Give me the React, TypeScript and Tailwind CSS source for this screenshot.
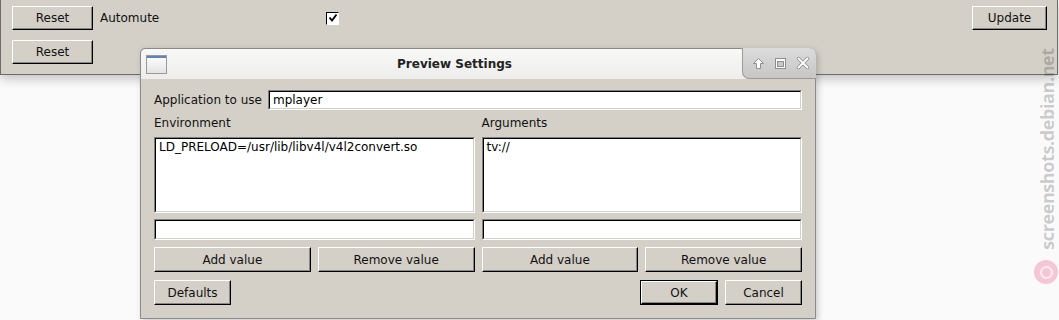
import React from "react"

const font = { fontFamily: '"DejaVu Sans", Verdana, sans-serif' }

function Btn({ children, className = "", isDefault = false }: { children: React.ReactNode; className?: string; isDefault?: boolean }) {
  return (
    <div className={(isDefault ? "border border-black " : "") + className}>
      <div className="flex h-full items-center justify-center border-t border-l border-t-white border-l-white border-b border-r border-b-black border-r-black bg-[#d4d0c8] text-[12px] text-[#111] shadow-[inset_-1px_-1px_0_#8a8782]">
        {children}
      </div>
    </div>
  )
}

function Field({ className = "", children }: { className?: string; children?: React.ReactNode }) {
  return (
    <div className={"border-t border-l border-t-[#808080] border-l-[#808080] border-b border-r border-b-white border-r-white " + className}>
      <div className="h-full border-t border-l border-t-black border-l-black border-b border-r border-b-[#d4d0c8] border-r-[#d4d0c8] bg-white px-[3px] text-[12px] leading-[16px] text-black">
        {children}
      </div>
    </div>
  )
}

function TitleControls() {
  return (
    <div className="flex h-[31px] w-[74px] items-center justify-center gap-[9px] rounded-tr-[7px] rounded-bl-[7px] border-l border-b border-[#9a9a9a] bg-gradient-to-b from-[#dcdcdc] to-[#c6c6c6] pl-[2px]">
      <svg width="13" height="13" viewBox="0 0 13 13">
        <path d="M6.5 1.5 L11.5 6.5 L8.5 6.5 L8.5 11.5 L4.5 11.5 L4.5 6.5 L1.5 6.5 Z" fill="#fff" stroke="#8e8e8e" strokeWidth="1" strokeLinejoin="round" />
      </svg>
      <svg width="13" height="13" viewBox="0 0 13 13">
        <rect x="1.5" y="1.5" width="10" height="10" fill="#fff" stroke="#8e8e8e" />
        <rect x="3.5" y="4.5" width="6" height="5" fill="#c8c8c8" stroke="#8e8e8e" />
      </svg>
      <svg width="14" height="14" viewBox="0 0 14 14">
        <path d="M2.5 2.5 L11.5 11.5 M11.5 2.5 L2.5 11.5" stroke="#8e8e8e" strokeWidth="3.4" strokeLinecap="round" />
        <path d="M2.5 2.5 L11.5 11.5 M11.5 2.5 L2.5 11.5" stroke="#fff" strokeWidth="1.8" strokeLinecap="round" />
      </svg>
    </div>
  )
}

function Column({ label, value }: { label: string; value: string }) {
  return (
    <div className="flex flex-col">
      <div className="h-[16px] text-[12px] leading-[16px] text-[#111]">{label}</div>
      <Field className="mt-[6px] h-[76px]">{value}</Field>
      <Field className="mt-[6px] h-[21px]" />
      <div className="mt-[7px] grid grid-cols-2 gap-[7px]">
        <Btn className="h-[25px]">Add value</Btn>
        <Btn className="h-[25px]">Remove value</Btn>
      </div>
    </div>
  )
}

export default function App() {
  return (
    <div className="relative h-[320px] w-[1059px] overflow-hidden bg-[#fafafa]" style={font}>
      {/* main window */}
      <div className="h-[75px] w-[1058px] border-l border-r border-b border-[#6e6c68] bg-[#d4d0c8] shadow-[0_4px_10px_rgba(0,0,0,0.22)]">
        <div className="flex items-center pt-[6px] pl-[11px] pr-[10px]">
          <Btn className="h-[24px] w-[81px]">Reset</Btn>
          <span className="ml-[7px] w-[226px] text-[12px] text-[#111]">Automute</span>
          <div className="flex h-[13px] w-[13px] items-center justify-center border-t border-l border-t-black border-l-black border-b border-r border-b-white border-r-white bg-white">
            <svg width="10" height="10" viewBox="0 0 10 10">
              <path d="M1.5 4.5 L4 7.5 L8.5 1.5" stroke="#000" strokeWidth="1.8" fill="none" />
            </svg>
          </div>
          <div className="flex-1" />
          <Btn className="h-[24px] w-[75px]">Update</Btn>
        </div>
        <div className="mt-[10px] pl-[11px]">
          <Btn className="h-[24px] w-[81px]">Reset</Btn>
        </div>
      </div>

      {/* watermark */}
      <div className="absolute left-[1047px] top-[149px] -translate-x-1/2 -translate-y-1/2 -rotate-90 whitespace-nowrap text-[18px] font-bold leading-none tracking-[-0.4px] text-[rgba(0,0,0,0.2)]" style={{ fontFamily: '"Open Sans", "DejaVu Sans", sans-serif' }}>
        screenshots.debian.net
      </div>
      <div className="absolute left-[1034px] top-[260px] flex h-[24px] w-[24px] items-center justify-center rounded-full bg-[#f5c6d5]">
        <div className="flex h-[13px] w-[13px] items-center justify-center rounded-full border-2 border-[#fbeef2]">
          <div className="h-[4px] w-[4px] rounded-full bg-[#f5c6d5]" />
        </div>
      </div>

      {/* dialog */}
      <div className="absolute left-[140px] top-[48px] h-[271px] w-[676px] rounded-tl-[5px] rounded-tr-[7px] border border-[#8a8a8a] bg-[#d4d0c8] shadow-[2px_2px_6px_rgba(0,0,0,0.2)]">
        <div className="flex h-[30px] items-stretch rounded-tl-[5px] rounded-tr-[7px] bg-gradient-to-b from-[#f8f8f7] to-[#ededeb]">
          <div className="flex items-center pl-[5px]">
            <div className="h-[19px] w-[21px] border border-[#9a9a9a] bg-gradient-to-b from-[#fefefe] to-[#e4e4e4]">
              <div className="h-[2px] bg-[#5b86c0]" />
            </div>
          </div>
          <div className="flex flex-1 items-center justify-center text-[12px] font-bold text-[#222]">Preview Settings</div>
          <div className="-mt-px -mr-px">
            <TitleControls />
          </div>
        </div>
        <div className="px-[13px] pt-[11px]">
          <div className="flex h-[20px] items-center">
            <span className="text-[12px] text-[#111]">Application to use</span>
            <Field className="ml-[6px] h-[20px] flex-1">mplayer</Field>
          </div>
          <div className="mt-[5px] grid grid-cols-2 gap-[7px]">
            <Column label="Environment" value="LD_PRELOAD=/usr/lib/libv4l/v4l2convert.so" />
            <Column label="Arguments" value="tv://" />
          </div>
          <div className="mt-[8px] flex items-center">
            <Btn className="h-[25px] w-[77px]">Defaults</Btn>
            <div className="flex-1" />
            <Btn className="h-[25px] w-[78px]" isDefault>OK</Btn>
            <Btn className="ml-[7px] h-[25px] w-[77px]">Cancel</Btn>
          </div>
        </div>
      </div>
    </div>
  )
}
